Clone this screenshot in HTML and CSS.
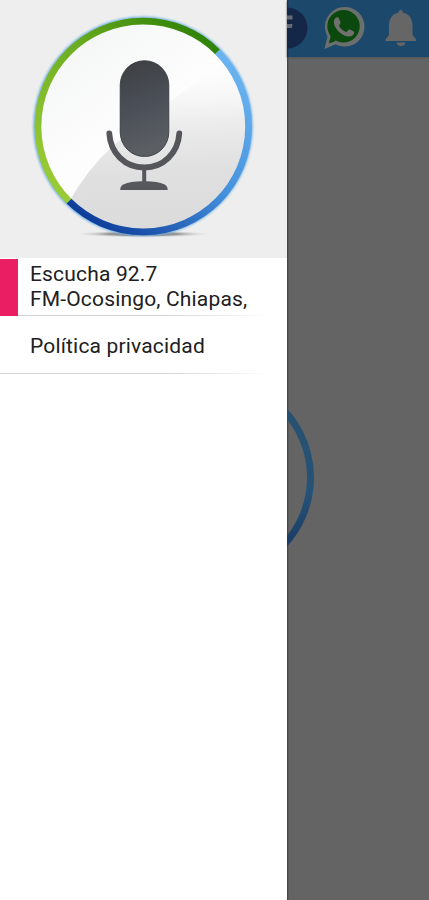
FILE: index.html
```html
<!DOCTYPE html>
<html lang="es">
<head>
<meta charset="utf-8">
<title>Radio</title>
<link rel="stylesheet" href="styles.css">
</head>
<body>
<div class="screen">
  <aside class="drawer">
    <header class="drawer-head">
      <svg class="mic" viewBox="0 0 287 258">
        <defs>
          <linearGradient id="face" x1="0" y1="0" x2=".7" y2="1"><stop offset="0" stop-color="#f3f4f5"/><stop offset=".55" stop-color="#fdfdfd"/></linearGradient>
          <linearGradient id="shade" x1=".6" y1="0" x2=".65" y2="1"><stop offset=".08" stop-color="#f9f9f9" stop-opacity="0"/><stop offset=".4" stop-color="#ececed"/><stop offset=".65" stop-color="#e0e0e1"/><stop offset="1" stop-color="#dadada"/></linearGradient>
          <linearGradient id="green" gradientUnits="userSpaceOnUse" x1="215" y1="50" x2="65" y2="200"><stop offset="0" stop-color="#328408"/><stop offset=".45" stop-color="#6cac20"/><stop offset="1" stop-color="#9acb36"/></linearGradient>
          <linearGradient id="blue" gradientUnits="userSpaceOnUse" x1="230" y1="55" x2="85" y2="220"><stop offset="0" stop-color="#6bb5f1"/><stop offset=".5" stop-color="#438fdb"/><stop offset="1" stop-color="#0d3c99"/></linearGradient>
          <linearGradient id="body" x1="0" y1="0" x2=".2" y2="1"><stop offset="0" stop-color="#3c3e41"/><stop offset=".55" stop-color="#4b5058"/><stop offset="1" stop-color="#5b5e63"/></linearGradient>
          <radialGradient id="shadow"><stop offset="0" stop-color="#777"/><stop offset=".5" stop-color="#999"/><stop offset="1" stop-color="#eee" stop-opacity="0"/></radialGradient>
          <filter id="soft" x="-10%" y="-10%" width="120%" height="120%"><feGaussianBlur stdDeviation="1"/></filter>
          <clipPath id="disc"><circle cx="143" cy="126.3" r="103"/></clipPath>
        </defs>
        <ellipse cx="143" cy="234" rx="70" ry="3.5" fill="url(#shadow)"/>
        <circle cx="143" cy="126.3" r="108.300" fill="none" stroke="#74b3e2" stroke-width="3" filter="url(#soft)"/>
        <circle cx="143" cy="126.3" r="103" fill="url(#face)"/>
        <path clip-path="url(#disc)" d="M68 204Q86 170 114 145Q170 98 245 50V235H68Z" fill="url(#shade)"/>
        <path d="M217.5 51.8A105.3 105.3 0 0 0 69 201.2" fill="none" stroke="url(#green)" stroke-width="6.8"/>
        <path d="M217.5 51.8A105.3 105.3 0 1 1 69 201.2" fill="none" stroke="url(#blue)" stroke-width="6.8"/>
        <rect x="120.2" y="60.7" width="48.6" height="95.8" rx="24.3" fill="url(#body)" stroke="#303338" stroke-width=".8"/>
        <path d="M109.3 133.5C110.5 153 125 167.5 144.2 167.5S178 153 179.3 133.5" fill="none" stroke="#54565a" stroke-width="5.8" stroke-linecap="round"/>
        <path d="M142.2 169h4v12.2c7 .2 13.500.8 18.500 3.200 2 1 3 3 3 5.600h-47.500c0-2.600 1-4.600 3-5.600 5-2.400 11.500-3 19-3.200z" fill="#56585c"/>
      </svg>
    </header>
    <nav>
      <div class="item active"><span class="title">Escucha 92.7<br>FM-Ocosingo, Chiapas,</span></div>
      <div class="item"><span class="title policy">Política privacidad</span></div>
    </nav>
  </aside>
  <main class="content">
    <div class="toolbar">
      <svg viewBox="287 0 142 58">
        <circle cx="287" cy="28" r="20.500" fill="#142748"/>
        <path d="M279 42V28h-4v-4h4v-2c0-4.500 3-6.500 7-6.500h6.500V19.500H287c-1.700 0-2.500.7-2.500 2V24h8l-.7 4H284.500v14z" fill="#666b73"/>
        <path d="M324.500 49l3-12.500A19.800 19.800 0 1 1 335.500 44.300Z" fill="#6b706d"/>
        <circle cx="343.500" cy="26.200" r="16.200" fill="#0b480d"/>
        <path d="M328.800 43.500l2-8 5 5.500z" fill="#0b480d"/>
        <path d="M335 18.500c1.500-1.700 3.200-1.500 4 .2l1.500 3.500c.4 1.200-1.700 2.500-1.400 3.700 1.500 3 4 5 7 6 1.400.2 2.500-3 3.800-2.500l3.800 2c1.400.8-.3 4-2.300 4.700-4 1.500-9-1.200-12.300-4.200-3.500-3.300-7.100-9.400-4.100-13.400z" fill="#70716f"/>
        <path d="M400.700 10c1.500 0 2.200 1 2.200 2.600 6.500 1.400 9.600 6.400 9.600 13.400v8.500c0 1.500 3.800 3.500 3.800 6.500h-31c0-3 3.700-5 3.700-6.500V26c0-7 3-12 9.500-13.400 0-1.600.7-2.600 2.200-2.600zM396.500 42.500h9c-.6 2.400-2.300 3.500-4.500 3.500s-3.900-1.100-4.500-3.500z" fill="#666"/>
      </svg>
    </div>
    <div class="stage">
      <svg viewBox="287 400 142 160">
        <defs><linearGradient id="dim" x1="0" y1="0" x2="0" y2="1"><stop offset="0" stop-color="#27516e"/><stop offset=".6" stop-color="#265277"/><stop offset="1" stop-color="#183863"/></linearGradient></defs>
        <path d="M272.500 400A98 98 0 0 1 272.500 555" fill="none" stroke="url(#dim)" stroke-width="7"/>
      </svg>
    </div>
  </main>
</div>
</body>
</html>
```
FILE: styles.css
```css
body {
  margin: 0;
  font-family: Roboto, sans-serif;
  color: #202020;
}
.screen {
  display: flex;
  width: 429px;
  height: 900px;
  overflow: hidden;
}
.drawer {
  width: 287px;
  flex: none;
  background: #fff;
}
.drawer-head {
  height: 258px;
  background: #eee;
}
svg {
  display: block;
}
.mic {
  width: 287px;
  height: 258px;
}
.item {
  position: relative;
  box-sizing: border-box;
  height: 58px;
  display: flex;
  align-items: center;
  padding-left: 30px;
}
.item::after {
  content: "";
  position: absolute;
  left: 0;
  bottom: 0;
  width: 270px;
  height: 1px;
  background: linear-gradient(90deg, #d2d2d2 60%, #fff);
}
.active::before {
  content: "";
  position: absolute;
  z-index: 1;
  left: 0;
  top: 1px;
  width: 18px;
  height: 57px;
  background: #e91e63;
}
.title {
  font-size: 21px;
  letter-spacing: 0.17px;
  line-height: 25px;
  white-space: nowrap;
}
.policy {
  padding-top: 3px;
}
.content {
  flex: 1;
  background: linear-gradient(90deg, #3c3c3c, #646464 2px);
}
.toolbar {
  height: 57px;
  background: linear-gradient(90deg, #10264a, #1c486b 2px);
  box-shadow: 0 1px 2px #505459;
}
.toolbar svg {
  width: 142px;
  height: 58px;
}
.stage {
  padding-top: 343px;
}
.stage svg {
  width: 142px;
  height: 160px;
}
```
